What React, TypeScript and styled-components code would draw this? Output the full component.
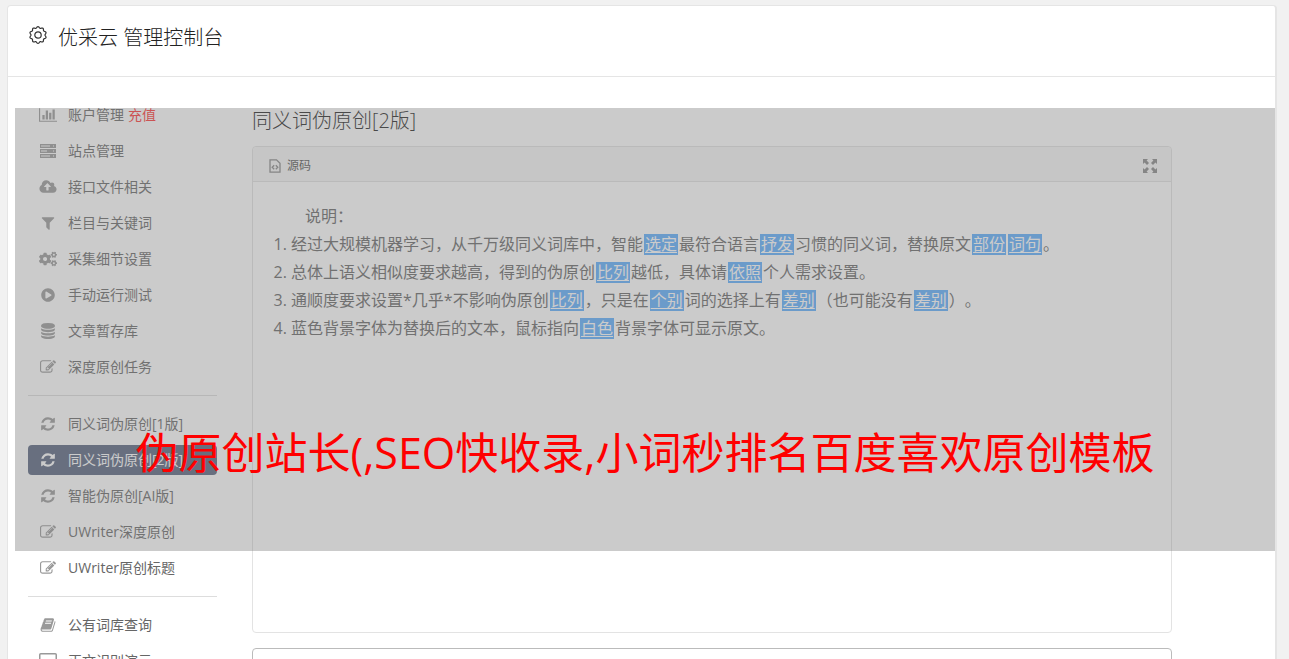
import React from 'react';
import styled, { createGlobalStyle } from 'styled-components';
import { FaCogs, FaPlayCircle } from 'react-icons/fa';

const GlobalStyle = createGlobalStyle`
  * { box-sizing: border-box; }
  body {
    margin: 0;
    background: #f1f1f1;
    color: #333;
    font-family: 'Open Sans', 'Noto Sans CJK SC', sans-serif;
    text-spacing-trim: space-all;
  }
`;

const Page = styled.div`
  height: 100vh;
  overflow: hidden;
  padding: 5px 12px 0 7px;
`;

const Card = styled.div`
  height: 100%;
  display: flex;
  flex-direction: column;
  background: #fff;
  border: 1px solid #e5e5e5;
  border-right-width: 2px;
  border-bottom: 0;
  border-radius: 4px 4px 0 0;
`;

const CardHeader = styled.header`
  display: flex;
  align-items: center;
  flex: none;
  height: 71px;
  padding: 0 21px 12px;
  border-bottom: 1px solid #e5e5e5;
`;

const Title = styled.h1`
  margin: 0 0 0 11px;
  padding-top: 6px;
  font-size: 20px;
  line-height: 28px;
  font-weight: 300;
  color: #222;
`;

const Workspace = styled.div`
  position: relative;
  flex: 1;
  min-height: 0;
  margin: 31px 0 0 7px;
  overflow: hidden;
`;

const Columns = styled.div`
  display: flex;
  gap: 35px;
  margin-top: -8px;
  padding: 0 103px 0 13px;
`;

const Sidebar = styled.nav`
  flex: none;
  width: 189px;
`;

const Menu = styled.ul`
  display: flex;
  flex-direction: column;
  gap: 6px;
  margin: 0;
  padding: 0;
  list-style: none;

  & + & {
    margin-top: 13px;
    padding-top: 13px;
    border-top: 1px solid #ddd;
  }
`;

const MenuLink = styled.a<{ $active?: boolean }>`
  display: flex;
  align-items: center;
  height: 30px;
  padding-left: 10px;
  border-radius: 4px;
  background: ${(p) => (p.$active ? '#57647f' : 'transparent')};
  color: ${(p) => (p.$active ? '#fff' : '#666')};
  font-size: 14px;
  font-weight: 400;
  line-height: 20px;
  text-decoration: none;
  white-space: nowrap;

  svg {
    color: ${(p) => (p.$active ? '#fff' : '#999')};
  }
`;

const IconSlot = styled.span`
  display: flex;
  justify-content: center;
  width: 20px;
  margin-right: 10px;
`;

const Recharge = styled.span`
  margin-left: 4px;
  color: #f33;
`;

const Main = styled.main`
  flex: 1;
  min-width: 0;
`;

const SectionTitle = styled.h2`
  margin: 7px 0 11px;
  font-size: 20px;
  font-weight: 300;
  line-height: 28px;
  color: #222;
`;

const Editor = styled.section`
  height: 487px;
  border: 1px solid #e3e3e3;
  border-radius: 4px;
`;

const Toolbar = styled.div`
  display: flex;
  align-items: center;
  justify-content: space-between;
  height: 35px;
  padding: 3px 14px 0 16px;
  background: #f7f7f7;
  border-bottom: 1px solid #e3e3e3;
  border-radius: 4px 4px 0 0;
`;

const ToolButton = styled.button`
  display: flex;
  align-items: center;
  gap: 6px;
  padding: 0;
  border: 0;
  background: none;
  color: #555;
  font: 400 12px/18px 'Open Sans', 'Noto Sans CJK SC', sans-serif;

  svg {
    color: #888;
  }
`;

const Document = styled.div`
  padding: 20px;
  color: #666;
  font-size: 16px;
  font-weight: 400;
  line-height: 28px;
`;

const Lead = styled.p`
  margin: 0;
  text-indent: 32px;
`;

const Notes = styled.ol`
  margin: 0;
  padding-left: 18px;
`;

const Swapped = styled.span`
  display: inline-block;
  height: 21px;
  margin: 0 1px;
  padding: 0 1px;
  background: #5dadfd;
  color: #fff;
  line-height: 21px;
  text-decoration: underline;
  text-underline-offset: 2px;
`;

const Result = styled.textarea`
  display: block;
  width: 100%;
  height: 120px;
  margin-top: 15px;
  border: 1px solid #bbb;
  border-radius: 4px;
  resize: none;
`;

const Veil = styled.div`
  position: absolute;
  inset: 0 0 auto;
  height: 443px;
  padding-top: 313px;
  background: rgba(128, 128, 128, 0.41);
  color: #f00;
  font-size: 43px;
  line-height: 64px;
  text-align: center;
  white-space: nowrap;
  pointer-events: none;
`;

type GlyphProps = { d: string; box?: number; width?: number; height?: number };

const Glyph = ({ d, box = 1792, width = 16, height = 16 }: GlyphProps) => (
  <svg width={width} height={height} viewBox={`0 0 ${box} 1792`} fill="currentColor" aria-hidden="true">
    <path d={d} />
  </svg>
);

const ChartIcon = () => (
  <Glyph box={2048} width={18} d="M640 896v512h-256v-512h256zm384-512v1024h-256v-1024h256zm1024 1152v128h-2048v-1536h128v1408h1920zm-640-896v768h-256v-768h256zm384-384v1152h-256v-1152h256z" />
);
const CloudIcon = () => (
  <Glyph box={1920} width={18} d="M1280 864q0-14-9-23l-352-352q-9-9-23-9t-23 9l-351 351q-10 12-10 24 0 14 9 23t23 9h224v352q0 13 9.5 22.5t22.5 9.5h192q13 0 22.5-9.5t9.5-22.5v-352h224q13 0 22.5-9.5t9.5-22.5zm640 288q0 159-112.5 271.5t-271.5 112.5h-1088q-185 0-316.5-131.5t-131.5-316.5q0-130 70-240t188-165q-2-30-2-43 0-212 150-362t362-150q156 0 285.5 87t188.5 231q71-62 166-62 106 0 181 75t75 181q0 76-41 138 130 31 213.5 135.5t83.5 238.5z" />
);
const FilterIcon = () => (
  <Glyph d="M1595 295q17 41-14 70l-493 493v742q0 42-39 59-13 5-25 5-27 0-45-19l-256-256q-19-19-19-45v-486l-493-493q-31-29-14-70 17-39 59-39h1280q42 0 59 39z" />
);
const DatabaseIcon = () => (
  <Glyph d="M896 768q237 0 443-43t325-127v170q0 69-103 128t-280 93.5-385 34.5-385-34.5-280-93.5-103-128v-170q119 84 325 127t443 43zm0 768q237 0 443-43t325-127v170q0 69-103 128t-280 93.5-385 34.5-385-34.5-280-93.5-103-128v-170q119 84 325 127t443 43zm0-384q237 0 443-43t325-127v170q0 69-103 128t-280 93.5-385 34.5-385-34.5-280-93.5-103-128v-170q119 84 325 127t443 43zm0-1152q208 0 385 34.5t280 93.5 103 128v128q0 69-103 128t-280 93.5-385 34.5-385-34.5-280-93.5-103-128v-128q0-69 103-128t280-93.5 385-34.5z" />
);
const EditIcon = () => (
  <Glyph d="M888 1184l116-116-152-152-116 116v56h96v96h56zm440-720q-16-16-33 1l-350 350q-17 17-1 33t33-1l350-350q17-17 1-33zm80 594v190q0 119-84.5 203.5t-203.5 84.5h-832q-119 0-203.5-84.5t-84.5-203.5v-832q0-119 84.5-203.5t203.5-84.5h832q63 0 117 25 15 7 18 23 3 17-9 29l-49 49q-14 14-32 8-23-6-45-6h-832q-66 0-113 47t-47 113v832q0 66 47 113t113 47h832q66 0 113-47t47-113v-126q0-13 9-22l64-64q15-15 35-7t20 29zm-96-738l288 288-672 672h-288v-288zm444 132l-92 92-288-288 92-92q28-28 68-28t68 28l152 152q28 28 28 68t-28 68z" />
);
const RefreshIcon = () => (
  <Glyph d="M1639 1056q0 5-1 7-64 268-268 434.5t-478 166.5q-146 0-282.5-55t-243.5-157l-129 129q-19 19-45 19t-45-19-19-45v-448q0-26 19-45t45-19h448q26 0 45 19t19 45-19 45l-137 137q71 66 161 102t187 36q134 0 250-65t186-179q11-17 53-117 8-23 30-23h192q13 0 22.5 9.5t9.5 22.5zm25-800v448q0 26-19 45t-45 19h-448q-26 0-45-19t-19-45 19-45l138-138q-148-137-349-137-134 0-250 65t-186 179q-11 17-53 117-8 23-30 23h-199q-13 0-22.5-9.5t-9.5-22.5v-7q65-268 270-434.5t480-166.5q146 0 284 55.5t245 156.5l130-129q19-19 45-19t45 19 19 45z" />
);
const BookIcon = () => (
  <Glyph d="M1703 478q40 57 18 129l-275 906q-19 64-76.5 107.5t-122.5 43.5h-923q-77 0-148.5-53.5t-99.5-131.5q-24-67-2-127 0-4 3-27t4-37q1-8-3-21.5t-3-19.5q2-11 8-21t16.5-23.5 16.5-23.5q23-38 45-91.5t30-91.5q3-10 .5-30t-.5-28q3-11 17-28t17-23q21-36 42-92t25-90q1-9-2.5-32t.5-28q4-13 22-30.5t22-22.5q19-26 42.5-84.5t27.5-96.5q1-8-3-25.5t-2-26.5q2-8 9-18t18-23 17-21q8-12 16.5-30.5t15-35 16-36 19.5-32 26.5-23.5 36-11.5 47.5 5.5l-1 3q38-9 51-9h761q74 0 114 56t18 130l-274 906q-36 119-71.5 153.5t-128.5 34.5h-869q-27 0-38 15-11 16-1 43 24 70 144 70h923q29 0 56-15.5t35-41.5l300-987q7-22 5-57 38 15 59 43zm-1064 2q-4 13 2 22.5t20 9.5h608q13 0 25.5-9.5t16.5-22.5l21-64q4-13-2-22.5t-20-9.5h-608q-13 0-25.5 9.5t-16.5 22.5zm-83 256q-4 13 2 22.5t20 9.5h608q13 0 25.5-9.5t16.5-22.5l21-64q4-13-2-22.5t-20-9.5h-608q-13 0-25.5 9.5t-16.5 22.5z" />
);
const ServerIcon = () => (
  <svg width="16" height="14" viewBox="0 0 16 14" fill="currentColor" aria-hidden="true">
    <path fillRule="evenodd" d="M0 0h16v4H0zM1 1.5v1h9v-1zM13 1.5v1h1v-1zM0 5h16v4H0zM1 6.5v1h6v-1zM13 6.5v1h1v-1zM0 10h16v4H0zM1 11.5v1h9v-1zM13 11.5v1h1v-1z" />
  </svg>
);
const LaptopIcon = () => (
  <svg width="18" height="18" viewBox="0 0 18 18" fill="none" stroke="currentColor" aria-hidden="true">
    <rect x="0.75" y="1.75" width="16.5" height="11" rx="1" strokeWidth="1.5" />
    <path d="M0 16h18" strokeWidth="2" />
  </svg>
);

const TEETH = 10;
const gearOutline = Array.from({ length: 120 }, (_, i) => {
  const angle = (i / 120) * Math.PI * 2;
  const radius = 7.7 + 0.7 * Math.cos(angle * TEETH);
  return `${(9 + radius * Math.sin(angle)).toFixed(2)},${(9 - radius * Math.cos(angle)).toFixed(2)}`;
}).join(' ');

const GearIcon = () => (
  <svg width="18" height="18" viewBox="0 0 18 18" fill="none" stroke="#333" strokeWidth="1.2" aria-hidden="true">
    <polygon points={gearOutline} strokeLinejoin="round" />
    <circle cx="9" cy="9" r="3.2" />
  </svg>
);

const SourceIcon = () => (
  <svg width="12" height="14" viewBox="0 0 12 14" fill="none" stroke="currentColor" strokeWidth="1.3" aria-hidden="true">
    <path d="M1 .8h6.5L11 4.3v8.9H1z" />
    <path d="M5.2 6.2 3.2 8.2l2 2M6.8 6.2l2 2-2 2" />
  </svg>
);

const ExpandIcon = () => (
  <svg width="14" height="14" viewBox="0 0 14 14" fill="currentColor" aria-hidden="true">
    <path d="M0 0h5L3.6 1.6 6 4 4 6 1.6 3.6 0 5zM14 0v5l-1.6-1.4L10 6 8 4l2.4-2.4L9 0zM0 14V9l1.6 1.4L4 8l2 2-2.4 2.4L5 14zM14 14H9l1.4-1.6L8 10l2-2 2.4 2.4L14 9z" />
  </svg>
);

type Entry = { icon: React.ReactNode; label: string; extra?: string; active?: boolean };

const groups: Entry[][] = [
  [
    { icon: <ChartIcon />, label: '账户管理', extra: '充值' },
    { icon: <ServerIcon />, label: '站点管理' },
    { icon: <CloudIcon />, label: '接口文件相关' },
    { icon: <FilterIcon />, label: '栏目与关键词' },
    { icon: <FaCogs size={18} />, label: '采集细节设置' },
    { icon: <FaPlayCircle size={14} />, label: '手动运行测试' },
    { icon: <DatabaseIcon />, label: '文章暂存库' },
    { icon: <EditIcon />, label: '深度原创任务' },
  ],
  [
    { icon: <RefreshIcon />, label: '同义词伪原创[1版]' },
    { icon: <RefreshIcon />, label: '同义词伪原创[2版]', active: true },
    { icon: <RefreshIcon />, label: '智能伪原创[AI版]' },
    { icon: <EditIcon />, label: 'UWriter深度原创' },
    { icon: <EditIcon />, label: 'UWriter原创标题' },
  ],
  [
    { icon: <BookIcon />, label: '公有词库查询' },
    { icon: <LaptopIcon />, label: '正文识别演示' },
  ],
];

export default function App() {
  return (
    <Page>
      <GlobalStyle />
      <Card>
        <CardHeader>
          <GearIcon />
          <Title>优采云 管理控制台</Title>
        </CardHeader>
        <Workspace>
          <Columns>
            <Sidebar>
              {groups.map((entries, index) => (
                <Menu key={index}>
                  {entries.map((entry) => (
                    <li key={entry.label}>
                      <MenuLink href="#" $active={entry.active}>
                        <IconSlot>{entry.icon}</IconSlot>
                        {entry.label}
                        {entry.extra && <Recharge>{entry.extra}</Recharge>}
                      </MenuLink>
                    </li>
                  ))}
                </Menu>
              ))}
            </Sidebar>
            <Main>
              <SectionTitle>同义词伪原创[2版]</SectionTitle>
              <Editor>
                <Toolbar>
                  <ToolButton type="button">
                    <SourceIcon />
                    源码
                  </ToolButton>
                  <ToolButton type="button" aria-label="全屏">
                    <ExpandIcon />
                  </ToolButton>
                </Toolbar>
                <Document>
                  <Lead>说明：</Lead>
                  <Notes>
                    <li>
                      经过大规模机器学习，从千万级同义词库中，智能<Swapped>选定</Swapped>最符合语言<Swapped>抒发</Swapped>习惯的同义词，替换原文<Swapped>部份</Swapped><Swapped>词句</Swapped>。
                    </li>
                    <li>
                      总体上语义相似度要求越高，得到的伪原创<Swapped>比列</Swapped>越低，具体请<Swapped>依照</Swapped>个人需求设置。
                    </li>
                    <li>
                      通顺度要求设置*几乎*不影响伪原创<Swapped>比列</Swapped>，只是在<Swapped>个别</Swapped>词的选择上有<Swapped>差别</Swapped>（也可能没有<Swapped>差别</Swapped>）。
                    </li>
                    <li>
                      蓝色背景字体为替换后的文本，鼠标指向<Swapped>白色</Swapped>背景字体可显示原文。
                    </li>
                  </Notes>
                </Document>
              </Editor>
              <Result aria-label="结果" />
            </Main>
          </Columns>
          <Veil>伪原创站长(,SEO快收录,小词秒排名百度喜欢原创模板</Veil>
        </Workspace>
      </Card>
    </Page>
  );
}
